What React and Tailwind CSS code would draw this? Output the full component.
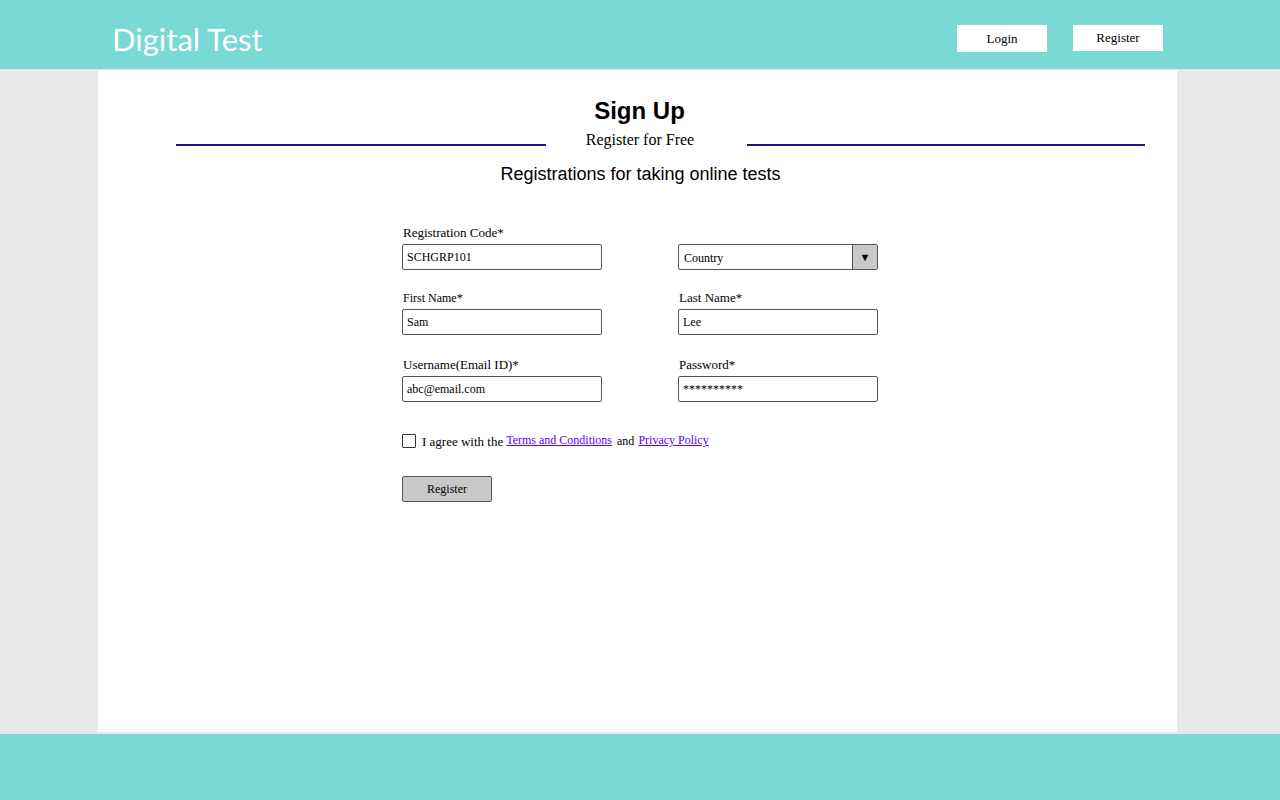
import React from 'react';

const serif = { fontFamily: '"Liberation Serif", serif' };
const sans = { fontFamily: '"Liberation Sans", Arial, sans-serif' };

function Field({ label, value, labelSize = 'text-[13px]' }) {
  return (
    <div className="flex flex-col">
      <label className={`${labelSize} text-black leading-[16px] pl-[1px] mb-[3px]`}>{label}</label>
      <div className="w-[200px] h-[26px] border border-[#555] rounded-[2px] bg-white flex items-center px-[4px] text-[12px] text-black">
        {value}
      </div>
    </div>
  );
}

export default function App() {
  return (
    <div className="min-h-screen bg-[#e8e8e8] flex flex-col" style={serif}>
      <header className="h-[69px] bg-[#79d9d4] flex items-start justify-between pl-[112px] pr-[117px]">
        <h1 className="text-white text-[31px] font-normal leading-[38px] mt-[20px]" style={{ fontFamily: 'Lato, sans-serif' }}>
          Digital Test
        </h1>
        <div className="flex gap-[26px] items-start mt-[25px]">
          <button className="w-[90px] h-[27px] bg-white text-[13px] text-black">Login</button>
          <button className="w-[90px] h-[26px] bg-white text-[13px] text-black">Register</button>
        </div>
      </header>

      <main className="mx-[98px] mt-[1px] h-[662px] w-[1079px] bg-white flex flex-col">
        <div className="flex flex-col items-center pt-[26px]">
          <h2 className="text-[24px] font-bold text-black leading-[30px] ml-[4px]" style={sans}>
            Sign Up
          </h2>
          <div className="w-full flex items-center pl-[78px] mt-[4px]">
            <div className="w-[370px] h-[2px] bg-[#2e0b8f] mt-[10px]" />
            <span className="w-[201px] pr-[13px] text-center text-[16px] text-black leading-[20px]">Register for Free</span>
            <div className="w-[398px] h-[2px] bg-[#2e0b8f] mt-[10px]" />
          </div>
          <p className="mt-[12px] text-[18px] text-black leading-[24px] ml-[6px]" style={sans}>
            Registrations for taking online tests
          </p>
        </div>

        <div className="pl-[304px] pt-[39px]">
          <div className="grid grid-cols-[200px_200px] gap-x-[76px] gap-y-[20px]">
            <Field label="Registration Code*" value="SCHGRP101" />
            <div className="flex flex-col justify-end">
              <div className="w-[200px] h-[26px] border border-[#555] rounded-[2px] bg-white flex items-center text-[12px] text-black">
                <span className="flex-1 px-[5px] pt-[2px]">Country</span>
                <span className="w-[25px] h-full bg-[#c8c8c8] border-l border-[#555] flex items-center justify-center text-[11px]">▼</span>
              </div>
            </div>
            <Field label="First Name*" value="Sam" labelSize="text-[12px]" />
            <Field label="Last Name*" value="Lee" />
            <div className="mt-[2px]">
              <Field label="Username(Email ID)*" value="abc@email.com" />
            </div>
            <div className="mt-[2px]">
              <Field label="Password*" value="**********" />
            </div>
          </div>

          <div className="flex items-center mt-[29px] text-[13px] text-black">
            <span className="w-[14px] h-[14px] border border-[#333] rounded-[1px] bg-white" />
            <span className="ml-[6px] pt-[1px]">I agree with the</span>
            <a href="#" className="ml-[3px] text-[12px] text-[#5a00ff] underline -mt-[2px]">Terms and Conditions</a>
            <span className="ml-[5px] text-[12px]">and</span>
            <a href="#" className="ml-[4px] text-[12px] text-[#5a00ff] underline -mt-[2px]">Privacy Policy</a>
          </div>

          <button className="mt-[24px] w-[90px] h-[26px] bg-[#c8c8c8] border border-[#555] rounded-[2px] text-[12px] text-black">
            Register
          </button>
        </div>
      </main>

      <footer className="h-[66px] mt-[2px] bg-[#79d9d4]" />
    </div>
  );
}
